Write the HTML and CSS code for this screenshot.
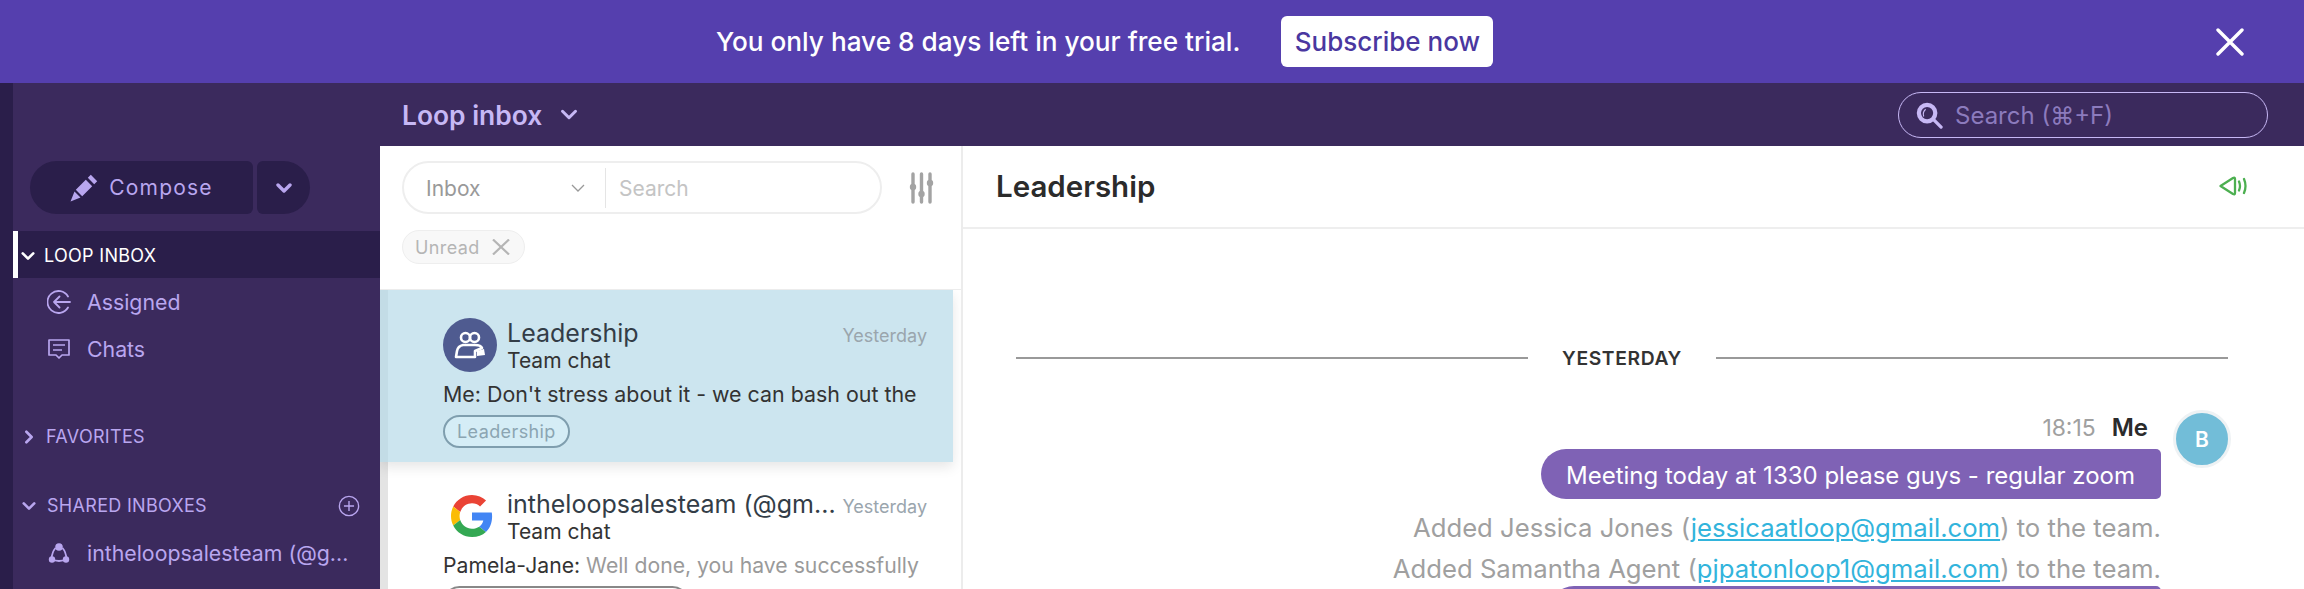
FILE: index.html
```html
<!DOCTYPE html>
<html lang="en">
<head>
    <meta charset="UTF-8">
    <title>Loop inbox</title>
    <link rel="stylesheet" href="styles.css">
</head>
<body>
    <div class="trial-banner">
        <span class="trial-text">You only have 8 days left in your free trial.</span>
        <button class="subscribe-btn">Subscribe now</button>
        <svg class="banner-close" viewBox="0 0 28 28"><path d="M2 2 L26 26 M26 2 L2 26" stroke="#fff" stroke-width="3.4" stroke-linecap="round"/></svg>
    </div>
    <div class="app">
        <div class="rail"></div>
        <aside class="sidebar">
            <div class="compose-row">
                <button class="compose-btn">
                    <svg class="pencil" viewBox="0 0 28 28"><path d="M5.8 15.8 L15.8 5.8 L22.2 12.2 L12.2 22.2 Z M17.8 3.8 L20.8 0.8 L27.2 7.2 L24.2 10.2 Z M4.5 17.5 L10.5 23.5 L0.5 27.5 Z" fill="#b9a6ef"/></svg>
                    Compose
                </button>
                <button class="compose-drop">
                    <svg class="chev" viewBox="0 0 16 12"><path d="M2 3 L8 9 L14 3" fill="none" stroke="#b9a6ef" stroke-width="3.4" stroke-linecap="round" stroke-linejoin="round"/></svg>
                </button>
            </div>
            <div class="nav-head active">
                <svg class="nav-chev" viewBox="0 0 16 12"><path d="M2 3 L8 9 L14 3" fill="none" stroke="#fff" stroke-width="3" stroke-linecap="round" stroke-linejoin="round"/></svg>
                LOOP INBOX
            </div>
            <div class="nav-item first">
                <svg class="nav-icon" viewBox="0 0 24 24"><path d="M21 6.5 A11 11 0 1 0 21 17.5 M23 12 H7 M12.5 6.5 L7 12 L12.5 17.5" fill="none" stroke="#b9a6ef" stroke-width="1.8" stroke-linecap="round" stroke-linejoin="round"/></svg>
                <span>Assigned</span>
            </div>
            <div class="nav-item chats">
                <svg class="nav-icon" viewBox="0 0 24 24"><path d="M2 3 H22 V18 H15 L12 21 L9 18 H2 Z M6 8 H18 M6 13 H15" fill="none" stroke="#b9a6ef" stroke-width="1.7" stroke-linejoin="round"/></svg>
                <span>Chats</span>
            </div>
            <div class="nav-head favorites">
                <svg class="nav-chev" viewBox="0 0 12 16"><path d="M3 2 L9 8 L3 14" fill="none" stroke="#b9a6ef" stroke-width="3" stroke-linecap="round" stroke-linejoin="round"/></svg>
                FAVORITES
            </div>
            <div class="nav-head shared">
                <svg class="nav-chev" viewBox="0 0 16 12"><path d="M2 3 L8 9 L14 3" fill="none" stroke="#b9a6ef" stroke-width="3" stroke-linecap="round" stroke-linejoin="round"/></svg>
                SHARED INBOXES
                <svg class="nav-plus" viewBox="0 0 24 24"><circle cx="12" cy="12" r="10.5" fill="none" stroke="#b9a6ef" stroke-width="1.5"/><path d="M12 6.5 V17.5 M6.5 12 H17.5" stroke="#b9a6ef" stroke-width="1.5"/></svg>
            </div>
            <div class="nav-item">
                <svg class="nav-icon" viewBox="0 0 24 24"><path d="M8.5 7 Q5 11 4.5 18 Q12 22 19.5 18 Q19 11 15.5 7" fill="none" stroke="#b9a6ef" stroke-width="1.8"/><circle cx="12" cy="6" r="3.8" fill="#b9a6ef"/><circle cx="5" cy="18.5" r="3.2" fill="#b9a6ef"/><circle cx="19" cy="18.5" r="3.2" fill="#b9a6ef"/></svg>
                <span>intheloopsalesteam (@g...</span>
            </div>
        </aside>
        <div class="main">
            <header class="topbar">
                <span class="inbox-title">Loop inbox</span>
                <svg class="title-chev" viewBox="0 0 16 12"><path d="M2 3 L8 9 L14 3" fill="none" stroke="#c7b8f5" stroke-width="2.8" stroke-linecap="round" stroke-linejoin="round"/></svg>
                <div class="global-search">
                    <svg class="search-icon" viewBox="0 0 28 28"><circle cx="11.5" cy="11.5" r="8.5" fill="none" stroke="#c7b8f5" stroke-width="4.4"/><path d="M18 18 L26 26" stroke="#c7b8f5" stroke-width="3.4" stroke-linecap="round"/><path d="M8 15 Q6.5 10.5 10 7.5" fill="none" stroke="#c7b8f5" stroke-width="1.2"/></svg>
                    Search (⌘+F)
                </div>
            </header>
            <div class="panes">
                <section class="list-pane">
                    <div class="filter-row">
                        <div class="filter-box">
                            <span class="filter-select">Inbox
                                <svg class="select-chev" viewBox="0 0 16 10"><path d="M2 2 L8 8 L14 2" fill="none" stroke="#999" stroke-width="1.3"/></svg>
                            </span>
                            <span class="filter-search">Search</span>
                        </div>
                        <svg class="sliders" viewBox="0 0 24 32"><path d="M3.5 2 V30 M12 2 V30 M20.5 2 V30" stroke="#a3a3a3" stroke-width="3.4" stroke-linecap="round"/><circle cx="3.5" cy="15" r="3.2" fill="#a3a3a3"/><circle cx="12" cy="22" r="3.2" fill="#a3a3a3"/><circle cx="20.5" cy="11" r="3.2" fill="#a3a3a3"/></svg>
                    </div>
                    <div class="chip">Unread
                        <svg class="chip-x" viewBox="0 0 18 16"><path d="M1 0.5 L17 15.5 M17 0.5 L1 15.5" stroke="#b5b5b5" stroke-width="2.2"/></svg>
                    </div>
                    <div class="threads">
                        <article class="thread selected">
                            <div class="thread-top">
                                <div class="team-avatar">
                                    <svg viewBox="0 0 32 28"><circle cx="11.5" cy="6.5" r="4.5" fill="none" stroke="#fff" stroke-width="2.6"/><circle cx="20.5" cy="6.5" r="4.5" fill="none" stroke="#fff" stroke-width="2.6"/><path d="M2 26 L3 20 Q4 15 9 14 H21 Q27 14 28 17 L21 20 V26 Z" fill="none" stroke="#fff" stroke-width="2.6" stroke-linejoin="round"/><path d="M23 20 L30 18 L31 24 L23 25 Z" fill="#fff"/></svg>
                                </div>
                                <div class="thread-names">
                                    <div class="thread-line">
                                        <span class="thread-name">Leadership</span>
                                        <span class="thread-date">Yesterday</span>
                                    </div>
                                    <div class="thread-type">Team chat</div>
                                </div>
                            </div>
                            <p class="thread-preview">Me: Don't stress about it - we can bash out the</p>
                            <span class="thread-tag">Leadership</span>
                        </article>
                        <article class="thread">
                            <div class="thread-top">
                                <svg class="google-logo" viewBox="0 0 48 48">
                                    <path fill="#EA4335" d="M24 9.5c3.54 0 6.71 1.22 9.21 3.6l6.85-6.85C35.9 2.38 30.47 0 24 0 14.62 0 6.51 5.38 2.56 13.22l7.98 6.19C12.43 13.72 17.74 9.5 24 9.5z"/>
                                    <path fill="#4285F4" d="M46.98 24.55c0-1.57-.15-3.09-.38-4.55H24v9.02h12.94c-.58 2.96-2.26 5.48-4.78 7.18l7.73 6c4.51-4.18 7.09-10.36 7.09-17.65z"/>
                                    <path fill="#FBBC05" d="M10.53 28.59c-.48-1.45-.76-2.99-.76-4.59s.27-3.14.76-4.59l-7.98-6.19C.92 16.46 0 20.12 0 24c0 3.88.92 7.54 2.56 10.78l7.97-6.19z"/>
                                    <path fill="#34A853" d="M24 48c6.48 0 11.93-2.13 15.89-5.81l-7.73-6c-2.15 1.45-4.92 2.3-8.16 2.3-6.26 0-11.57-4.22-13.47-9.91l-7.98 6.19C6.51 42.62 14.62 48 24 48z"/>
                                </svg>
                                <div class="thread-names">
                                    <div class="thread-line">
                                        <span class="thread-name">intheloopsalesteam (@gm...</span>
                                        <span class="thread-date">Yesterday</span>
                                    </div>
                                    <div class="thread-type">Team chat</div>
                                </div>
                            </div>
                            <p class="thread-preview">Pamela-Jane: <span class="muted">Well done, you have successfully</span></p>
                            <span class="thread-tag plain"></span>
                        </article>
                    </div>
                </section>
                <section class="chat-pane">
                    <div class="chat-head">
                        <h1 class="chat-title">Leadership</h1>
                        <svg class="speaker" viewBox="0 0 28 20"><path d="M1.5 10 L14 2 Q16 1 16 3 V17 Q16 19 14 18 Z M20 5.5 Q22 10 20 14.5 M25 3 Q28 10 25 17" fill="none" stroke="#4caf50" stroke-width="2.3" stroke-linecap="round" stroke-linejoin="round"/></svg>
                    </div>
                    <div class="chat-body">
                        <div class="day-divider"><span>YESTERDAY</span></div>
                        <div class="message">
                            <div class="message-main">
                                <div class="message-meta"><span class="message-time">18:15</span><span class="message-author">Me</span></div>
                                <div class="bubble">Meeting today at 1330 please guys - regular zoom</div>
                                <p class="sys-line">Added Jessica Jones (<a href="#">jessicaatloop@gmail.com</a>) to the team.</p>
                                <p class="sys-line">Added Samantha Agent (<a href="#">pjpatonloop1@gmail.com</a>) to the team.</p>
                                <div class="bubble second"></div>
                            </div>
                            <div class="me-avatar"><span>B</span></div>
                        </div>
                    </div>
                </section>
            </div>
        </div>
    </div>
</body>
</html>
```

FILE: styles.css
```css
* {
    box-sizing: border-box;
}
html, body {
    height: 100%;
}
body {
    margin: 0;
    overflow: hidden;
    font-family: Inter, "Liberation Sans", sans-serif;
    display: flex;
    flex-direction: column;
    background: #fff;
}
button {
    font-family: inherit;
    border: none;
}
p {
    margin: 0;
}

/* trial banner */
.trial-banner {
    height: 83px;
    flex: none;
    background: #553fae;
    display: flex;
    align-items: center;
    padding-left: 716px;
}
.trial-text {
    color: #fff;
    font-size: 26.2px;
    font-weight: 500;
    white-space: nowrap;
}
.subscribe-btn {
    margin-left: 41px;
    width: 212px;
    height: 51px;
    background: #fff;
    color: #4a37a0;
    font-size: 26px;
    font-weight: 500;
    border-radius: 6px;
    padding: 0;
}
.banner-close {
    width: 28px;
    height: 28px;
    margin-left: 723px;
}

/* layout */
.app {
    flex: 1;
    display: flex;
    min-height: 0;
}
.rail {
    width: 13px;
    background: #2a1e4a;
}
.sidebar {
    width: 367px;
    flex: none;
    background: #3b2a5d;
    padding-top: 78px;
    color: #b9a6ef;
}
.main {
    flex: 1;
    min-width: 0;
    display: flex;
    flex-direction: column;
}

/* sidebar */
.compose-row {
    display: flex;
    gap: 4px;
    padding-left: 17px;
    height: 53px;
}
.compose-btn {
    width: 223px;
    background: #2a1e4a;
    color: #b9a6ef;
    font-size: 21px;
    letter-spacing: 1.2px;
    border-radius: 27px 6px 6px 27px;
    display: flex;
    align-items: center;
    justify-content: center;
    gap: 11px;
    padding: 0;
}
.pencil {
    width: 28px;
    height: 28px;
}
.compose-drop {
    width: 53px;
    background: #2a1e4a;
    border-radius: 6px 27px 27px 6px;
    display: flex;
    align-items: center;
    justify-content: center;
    padding: 0;
}
.chev {
    width: 16px;
    height: 12px;
}
.nav-head {
    display: flex;
    align-items: center;
    font-size: 18px;
    height: 47px;
    padding-left: 9px;
    letter-spacing: 0.3px;
}
.nav-head.active {
    margin-top: 17px;
    padding-top: 2px;
    background: #2a1e4a;
    color: #fff;
    border-left: 5px solid #fff;
    padding-left: 3px;
}
.nav-head.active .nav-chev {
    margin-right: 9px;
}
.nav-chev {
    width: 14px;
    height: 14px;
    margin-right: 10px;
}
.nav-head.favorites {
    margin-top: 41px;
    padding-left: 9px;
}
.nav-head.shared {
    margin-top: 22px;
}
.nav-head.shared .nav-chev {
    margin-right: 11px;
}
.nav-plus {
    width: 22px;
    height: 22px;
    margin-left: auto;
    margin-right: 20px;
}
.nav-item {
    display: flex;
    align-items: center;
    font-size: 21.3px;
    height: 47px;
    padding-left: 34px;
    gap: 16px;
    white-space: nowrap;
}
.nav-icon {
    width: 24px;
    height: 24px;
    flex: none;
}

/* top bar */
.topbar {
    height: 63px;
    flex: none;
    background: #3b2a5d;
    display: flex;
    align-items: center;
    padding-left: 22px;
}
.inbox-title {
    color: #c7b8f5;
    font-size: 26.4px;
    font-weight: 600;
}
.title-chev {
    width: 18px;
    height: 13px;
    margin-left: 18px;
}
.global-search {
    margin-left: auto;
    margin-right: 36px;
    width: 370px;
    height: 46px;
    border: 1.5px solid #c7b8f5;
    border-radius: 23px;
    display: flex;
    align-items: center;
    padding: 2px 0 0 17px;
    gap: 12px;
    color: #8c7bbd;
    font-size: 24px;
}
.search-icon {
    width: 27px;
    height: 27px;
}

/* panes */
.panes {
    flex: 1;
    display: flex;
    min-height: 0;
}
.list-pane {
    width: 583px;
    flex: none;
    border-right: 2px solid #ececec;
    display: flex;
    flex-direction: column;
    min-height: 0;
}
.filter-row {
    display: flex;
    align-items: center;
    padding: 15px 0 0 22px;
}
.filter-box {
    width: 480px;
    height: 53px;
    border: 2px solid #eee;
    border-radius: 27px;
    display: flex;
    align-items: center;
}
.filter-select {
    width: 202px;
    height: 40px;
    border-right: 1px solid #e5e5e5;
    padding: 1px 19px 0 22px;
    display: flex;
    align-items: center;
    justify-content: space-between;
    color: #999;
    font-size: 21px;
}
.select-chev {
    width: 16px;
    height: 10px;
}
.filter-search {
    padding: 1px 0 0 13px;
    color: #c4c4c4;
    font-size: 21px;
}
.sliders {
    width: 25px;
    height: 32px;
    margin-left: 27px;
}
.chip {
    margin: 16px 0 0 22px;
    width: 123px;
    height: 34px;
    flex: none;
    border: 1px solid #eee;
    border-radius: 17px;
    background: #f8f8f8;
    color: #b5b5b5;
    font-size: 18px;
    letter-spacing: 0.4px;
    display: flex;
    align-items: center;
    padding-left: 12px;
    gap: 12px;
}
.chip-x {
    width: 18px;
    height: 16px;
}
.threads {
    margin-top: 25px;
    border-top: 1px solid #ececec;
    background: linear-gradient(#e4e4e4, #e4e4e4) left top / 8px 100% no-repeat;
    flex: 1;
    min-height: 0;
    overflow: hidden;
    padding: 0 8px;
}
.thread {
    padding: 28px 26px 0 55px;
}
.thread.selected {
    height: 172px;
    margin-left: -8px;
    padding-left: 63px;
    background: #cce5ef;
    box-shadow: inset 8px 0 0 #c3dce6, 0 5px 12px rgba(0, 0, 0, 0.1);
    position: relative;
}
.thread-top {
    display: flex;
    gap: 10px;
}
.team-avatar {
    width: 54px;
    height: 54px;
    flex: none;
    border-radius: 50%;
    background: #4f5b90;
    display: flex;
    align-items: center;
    justify-content: center;
}
.team-avatar svg {
    width: 32px;
    height: 28px;
}
.google-logo {
    width: 42px;
    height: 42px;
    margin: 6px 4px 0 8px;
    flex: none;
}
.thread-names {
    flex: 1;
    min-width: 0;
}
.thread-line {
    display: flex;
    justify-content: space-between;
    align-items: baseline;
}
.thread-name {
    font-size: 25px;
    color: #333d47;
    white-space: nowrap;
}
.thread-date {
    font-size: 18px;
    color: #9aa5ad;
}
.thread-type {
    font-size: 21px;
    color: #333;
}
.thread-preview {
    margin-top: 8px;
    font-size: 21.2px;
    color: #333;
    white-space: nowrap;
}
.thread.selected .thread-preview {
    font-size: 21.4px;
}
.muted {
    color: #9a9a9a;
}
.thread-tag {
    display: inline-block;
    margin-top: 8px;
    height: 33px;
    line-height: 29px;
    padding: 0 12px;
    border: 2px solid #7f9eae;
    border-radius: 17px;
    background: #d5edf6;
    color: #8ba5b2;
    font-size: 18px;
    letter-spacing: 0.4px;
}
.thread:not(.selected) {
    padding-top: 27px;
    background: #fff;
}
.thread-tag.plain {
    background: #fff;
    border-color: #888;
    width: 246px;
}

/* chat pane */
.chat-pane {
    flex: 1;
    min-width: 0;
    display: flex;
    flex-direction: column;
    min-height: 0;
}
.chat-head {
    height: 83px;
    flex: none;
    border-bottom: 2px solid #eee;
    display: flex;
    align-items: center;
    justify-content: space-between;
    padding: 0 57px 2px 33px;
}
.chat-title {
    margin: 0;
    font-size: 29.5px;
    font-weight: 600;
    color: #2b2b2b;
}
.speaker {
    width: 28px;
    height: 20px;
}
.chat-body {
    flex: 1;
    min-height: 0;
    overflow: hidden;
    padding: 0 73px 0 53px;
}
.day-divider {
    margin-top: 117px;
    margin-right: 3px;
    display: flex;
    align-items: center;
    gap: 34px;
    font-size: 19.3px;
    font-weight: 600;
    letter-spacing: 0.6px;
    color: #333;
}
.day-divider::before, .day-divider::after {
    content: "";
    flex: 1;
    height: 2px;
    background: #999;
}
.message {
    margin-top: 40px;
    display: flex;
    justify-content: flex-end;
    gap: 12px;
}
.message-main {
    display: flex;
    flex-direction: column;
    align-items: flex-end;
    padding-top: 3px;
}
.message-meta {
    display: flex;
    align-items: baseline;
    gap: 16px;
    padding-right: 13px;
}
.message-time {
    font-size: 22.9px;
    color: #a0a0a0;
}
.message-author {
    font-size: 24px;
    font-weight: 600;
    color: #2b2b2b;
}
.bubble {
    margin-top: 7px;
    height: 50px;
    width: 620px;
    padding: 2px 24px 0 25px;
    display: flex;
    align-items: center;
    background: #7f62b5;
    color: #fff;
    font-size: 24px;
    border-radius: 25px 5px 5px 25px;
    white-space: nowrap;
}
.sys-line {
    margin-top: 11px;
    font-size: 25.7px;
    line-height: 30px;
    color: #a0a0a0;
    white-space: nowrap;
}
.bubble + .sys-line {
    margin-top: 14px;
}
.sys-line a {
    color: #32b4dc;
}
.bubble.second {
    margin-top: 2px;
    width: 612px;
}
.me-avatar {
    width: 58px;
    height: 58px;
    flex: none;
    border-radius: 50%;
    border: 3px solid #eef2f4;
    background: #72bdd8;
    color: #fff;
    font-size: 21px;
    font-weight: 600;
    display: flex;
    align-items: center;
    justify-content: center;
}
```
